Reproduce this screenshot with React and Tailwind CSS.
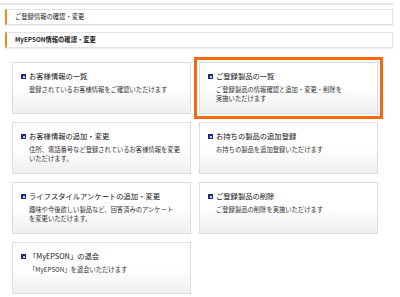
import React from "react";

const jp = { fontFamily: '"Noto Sans CJK JP", "Noto Sans", sans-serif' };

const cards = [
  { title: "お客様情報の一覧", desc: ["登録されているお客様情報をご確認いただけます"] },
  { title: "ご登録製品の一覧", desc: ["ご登録製品の情報確認と追加・変更・削除を", "実施いただけます"], active: true },
  { title: "お客様情報の追加・変更", desc: ["住所、電話番号など登録されているお客様情報を変更", "いただけます。"] },
  { title: "お持ちの製品の追加登録", desc: ["お持ちの製品を追加登録いただけます"] },
  { title: "ライフスタイルアンケートの追加・変更", desc: ["趣味や今後欲しい製品など、回答済みのアンケート", "を変更いただけます。"] },
  { title: "ご登録製品の削除", desc: ["ご登録製品の削除を実施いただけます"] },
  { title: "「MyEPSON」の退会", desc: ["「MyEPSON」を退会いただけます"] },
];

const Bar = ({ children, bold }) => (
  <div className="flex h-[16px] w-[388px] items-center border border-l-2 border-[#e2e2e2] border-l-[#f08a1c] bg-white pl-[8px] shadow-[0_1px_1px_rgba(0,0,0,0.06)]">
    <span className={`text-[6.3px] leading-none text-[#222] ${bold ? "font-bold" : ""}`}>{children}</span>
  </div>
);

const Card = ({ title, desc, active }) => (
  <div
    className={`h-[52px] w-[179px] border border-[#dedede] bg-gradient-to-b from-white from-50% to-[#efefef] pl-[8px] pt-[8px] ${
      active ? "outline-[3px] outline-offset-[2px] outline-[#f26a10] outline-solid" : ""
    }`}
  >
    <div className="flex items-center gap-[3px]">
      <span className="flex h-[5px] w-[5px] items-center justify-center bg-[#1d2a82]">
        <span className="h-[2px] w-[2px] bg-[#c9d0f0]" />
      </span>
      <span className="whitespace-nowrap text-[7.3px] leading-[11px] text-[#111]">{title}</span>
    </div>
    <div className="mt-[3px] pl-[8px] text-[6.3px] leading-[9px] text-[#333]">
      {desc.map((d) => (
        <div key={d} className="whitespace-nowrap">{d}</div>
      ))}
    </div>
  </div>
);

export default function App() {
  return (
    <div className="h-[297px] w-[400px] overflow-hidden bg-white" style={jp}>
      <div className="mt-[3px] h-[2px] w-[394px] bg-[#e4e4e4]" />
      <div className="flex flex-col gap-[7px] pl-[5px] pt-[4px]">
        <Bar>ご登録情報の確認・変更</Bar>
        <Bar bold>MyEPSON情報の確認・変更</Bar>
      </div>
      <div className="mt-[14px] grid grid-cols-[179px_179px] gap-x-[8px] gap-y-[8px] pl-[12px]">
        {cards.map((c) => (
          <Card key={c.title} {...c} />
        ))}
      </div>
    </div>
  );
}
